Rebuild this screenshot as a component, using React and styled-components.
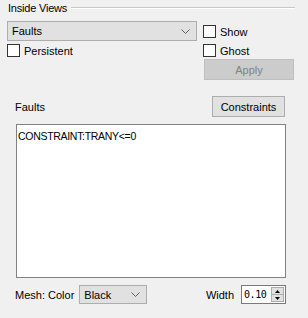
import styled, { createGlobalStyle } from "styled-components";

const GlobalStyle = createGlobalStyle`
    body {
        margin: 0;
        background: #f0f0f0;
    }
`

const Panel = styled.div`
    width: 308px;
    height: 318px;
    box-sizing: border-box;
    padding-top: 1px;
    background: #f0f0f0;
    font-family: "Liberation Sans", Arial, sans-serif;
    font-size: 11px;
    line-height: 14px;
    color: #000;
    display: flex;
    flex-direction: column;
`

const GroupHeader = styled.div`
    display: flex;
    align-items: center;
    margin: 0 13px 0 8px;
    height: 14px;
    letter-spacing: -0.2px;
`

const GroupLine = styled.div`
    flex-grow: 1;
    height: 1px;
    margin-left: 4px;
    background: #c9c9c9;
    border-bottom: 1px solid #ffffff;
`

const TopRow = styled.div`
    display: flex;
    margin: 6px 0 0 7px;
`

const Column = styled.div`
    display: flex;
    flex-direction: column;
    width: ${p => p.$width}px;
    margin-left: ${p => p.$left || 0}px;
`

const Combo = styled.div`
    display: flex;
    align-items: center;
    box-sizing: border-box;
    width: ${p => p.$width}px;
    height: ${p => p.$height}px;
    padding: 0 6px 0 4px;
    background: #e1e1e1;
    border: 1px solid #adadad;
    span {
        flex-grow: 1;
    }
`

const CheckRow = styled.label`
    display: flex;
    align-items: center;
    height: 13px;
    margin-top: ${p => p.$top}px;
`

const Box = styled.span`
    box-sizing: border-box;
    width: 13px;
    height: 13px;
    border: 1px solid #333333;
    background: #ffffff;
    margin-right: 4px;
`

const Button = styled.div`
    box-sizing: border-box;
    display: flex;
    align-items: center;
    justify-content: center;
    width: ${p => p.$width}px;
    height: 21px;
    margin-top: ${p => p.$top || 0}px;
    margin-left: ${p => p.$left || 0}px;
    background: ${p => p.$disabled ? '#cccccc' : '#e1e1e1'};
    border: 1px solid ${p => p.$disabled ? '#bfbfbf' : '#adadad'};
    color: ${p => p.$disabled ? '#838383' : '#000'};
`

const LabelRow = styled.div`
    display: flex;
    align-items: center;
    justify-content: space-between;
    margin: 16px 23px 0 15px;
`

const TextArea = styled.div`
    box-sizing: border-box;
    width: 270px;
    height: 154px;
    margin: 7px 0 0 16px;
    padding: 4px 1px;
    background: #ffffff;
    border: 1px solid #828282;
    font-size: 10.5px;
    letter-spacing: -0.3px;
`

const BottomRow = styled.div`
    display: flex;
    align-items: center;
    margin: 7px 0 0 15px;
    height: 19px;
`

const Label = styled.span`
    margin-right: ${p => p.$gap || 0}px;
`

const Spacer = styled.div`
    flex-grow: 1;
`

const SpinBox = styled.div`
    box-sizing: border-box;
    display: flex;
    align-items: center;
    width: 45px;
    height: 19px;
    margin-right: 22px;
    padding: 1px 1px 1px 2px;
    background: #ffffff;
    border: 1px solid #7a7a7a;
    font-family: "DejaVu Sans Mono", monospace;
    font-size: 10px;
    letter-spacing: -0.4px;
    span {
        flex-grow: 1;
    }
`

const SpinButtons = styled.div`
    display: flex;
    flex-direction: column;
    width: 13px;
    height: 15px;
    border: 1px solid #adadad;
    box-sizing: border-box;
    background: #e1e1e1;
`

const SpinHalf = styled.div`
    flex-grow: 1;
    display: flex;
    align-items: center;
    justify-content: center;
    & + & {
        border-top: 1px solid #adadad;
    }
`

const Chevron = () => (
    <svg width="9" height="5" viewBox="0 0 9 5">
        <polyline points="0.5,0.5 4.5,4.5 8.5,0.5" fill="none" stroke="#606060" strokeWidth="1" />
    </svg>
)

const Arrow = ({ up }) => (
    <svg width="5" height="3" viewBox="0 0 5 3">
        <polygon points={up ? "0,3 5,3 2.5,0" : "0,0 5,0 2.5,3"} fill="#000" />
    </svg>
)

const Check = ({ top, children }) => (
    <CheckRow $top={top}>
        <Box />
        {children}
    </CheckRow>
)

const App = () => {
    return (
        <Panel>
            <GlobalStyle />
            <GroupHeader>
                <span>Inside Views</span>
                <GroupLine />
            </GroupHeader>
            <TopRow>
                <Column $width={190}>
                    <Combo $width={190} $height={20}>
                        <span>Faults</span>
                        <Chevron />
                    </Combo>
                    <Check top={3}>Persistent</Check>
                </Column>
                <Column $width={91} $left={6}>
                    <Check top={4}>Show</Check>
                    <Check top={6}>Ghost</Check>
                    <Button $width={90} $top={2} $left={1} $disabled>Apply</Button>
                </Column>
            </TopRow>
            <LabelRow>
                <span>Faults</span>
                <Button $width={73}>Constraints</Button>
            </LabelRow>
            <TextArea>CONSTRAINT:TRANY&lt;=0</TextArea>
            <BottomRow>
                <Label $gap={5}>Mesh: Color</Label>
                <Combo $width={68} $height={19}>
                    <span>Black</span>
                    <Chevron />
                </Combo>
                <Spacer />
                <Label $gap={7}>Width</Label>
                <SpinBox>
                    <span>0.10</span>
                    <SpinButtons>
                        <SpinHalf><Arrow up /></SpinHalf>
                        <SpinHalf><Arrow /></SpinHalf>
                    </SpinButtons>
                </SpinBox>
            </BottomRow>
        </Panel>
    )
}

export default App;
